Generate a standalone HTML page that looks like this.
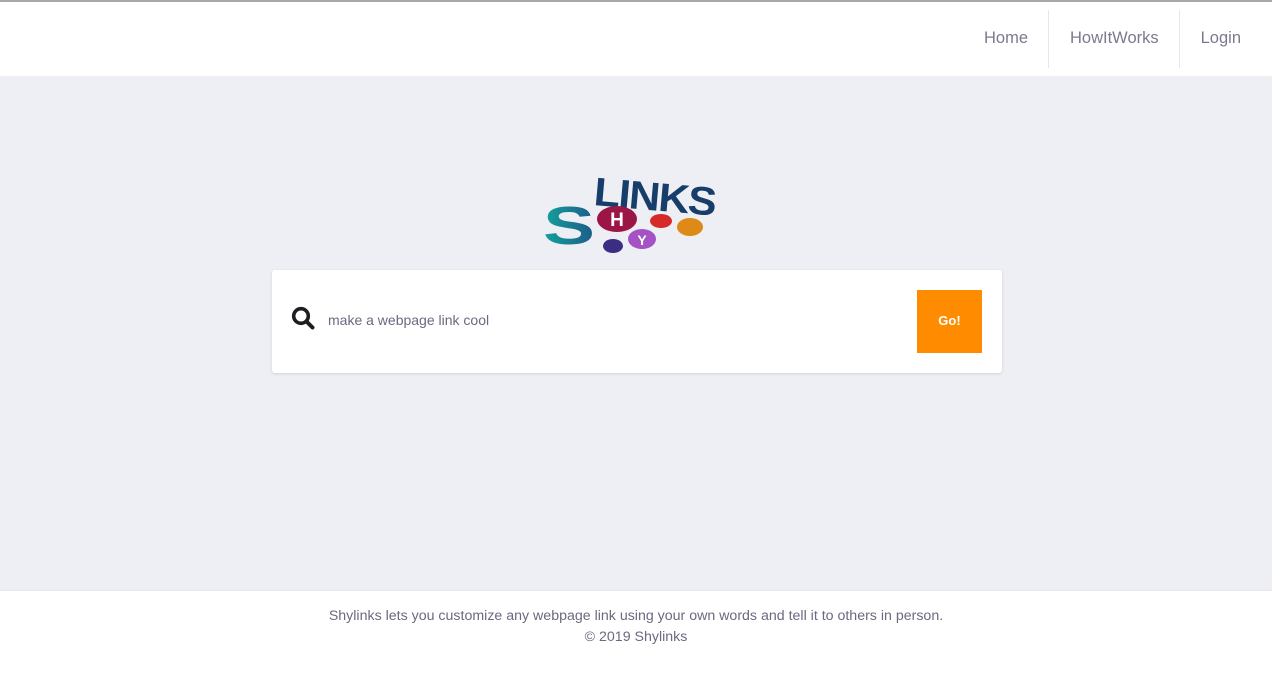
<!DOCTYPE html>
<html><head><meta charset="utf-8"><style>
*{margin:0;padding:0;box-sizing:border-box}
body{width:1272px;height:687px;background:#fff;font-family:"Liberation Sans",sans-serif;position:relative;overflow:hidden}
.top{position:absolute;top:0;left:0;width:1272px;height:2px;background:#a8a8a8}
nav{position:absolute;top:10px;right:0;height:58px;display:flex}
nav a{display:block;padding:0 20px 0 21px;line-height:56px;font-size:16.5px;color:#7a7a8e;text-decoration:none;border-left:1px solid #e6e6ee}
nav a:first-child{border-left:none}
nav a:last-child{padding-right:31px}
.main{position:absolute;top:76px;left:0;width:1272px;height:515px;background:#eeeff4;border-bottom:1px solid #e4e4ea}
.box{position:absolute;left:272px;top:270px;width:730px;height:103px;background:#fff;border-radius:3px;box-shadow:0 1px 3px rgba(0,0,0,.12)}
.box .t{position:absolute;left:56px;top:42px;font-size:14px;color:#6a6a80}
.go{position:absolute;left:645px;top:20px;width:65px;height:63px;background:#ff8c00;color:#fff;font-size:13px;font-weight:bold;text-align:center;line-height:61px}
.foot{position:absolute;top:606px;width:1272px;text-align:center;font-size:14.2px;color:#6a6a80;line-height:21px}
</style></head><body>
<div class="top"></div>
<nav><a>Home</a><a>HowItWorks</a><a>Login</a></nav>
<div class="main"></div>
<svg style="position:absolute;left:530px;top:170px" width="200" height="95" viewBox="530 170 200 95">
<defs><linearGradient id="g" x1="0" x2="1"><stop offset="0" stop-color="#13a39a"/><stop offset="1" stop-color="#1d5a8a"/></linearGradient></defs>
<text x="0" y="0" font-family="Liberation Sans" font-weight="bold" font-size="60" fill="url(#g)" transform="translate(543,244) scale(1.3,0.9)">S</text>
<text x="0" y="0" font-family="Liberation Sans" font-weight="bold" font-size="40" fill="#173d6a" transform="translate(593,205) rotate(5) scale(1.08,1)" letter-spacing="-1.5">LINKS</text>
<ellipse cx="617" cy="219" rx="20" ry="13" fill="#9b1545"/>
<text x="617" y="226" text-anchor="middle" font-family="Liberation Sans" font-weight="bold" font-size="19" fill="#fff">H</text>
<ellipse cx="661" cy="221" rx="11" ry="7" fill="#d62a2a"/>
<ellipse cx="690" cy="227" rx="13" ry="9" fill="#de8a18"/>
<ellipse cx="642" cy="239" rx="14" ry="10" fill="#a552c4"/>
<text x="642" y="245" text-anchor="middle" font-family="Liberation Sans" font-weight="bold" font-size="14" fill="#fff">Y</text>
<ellipse cx="613" cy="246" rx="10" ry="7" fill="#3a2d82"/>
</svg>
<div class="box">
<svg style="position:absolute;left:19px;top:36px" width="26" height="26" viewBox="0 0 26 26"><circle cx="10" cy="10" r="7.3" fill="none" stroke="#1e1e22" stroke-width="3.6"/><line x1="15.5" y1="15.5" x2="21.5" y2="21.5" stroke="#1e1e22" stroke-width="4" stroke-linecap="round"/></svg>
<div class="t">make a webpage link cool</div>
<div class="go">Go!</div>
</div>
<div class="foot">Shylinks lets you customize any webpage link using your own words and tell it to others in person.<br>© 2019 Shylinks</div>
</body></html>
